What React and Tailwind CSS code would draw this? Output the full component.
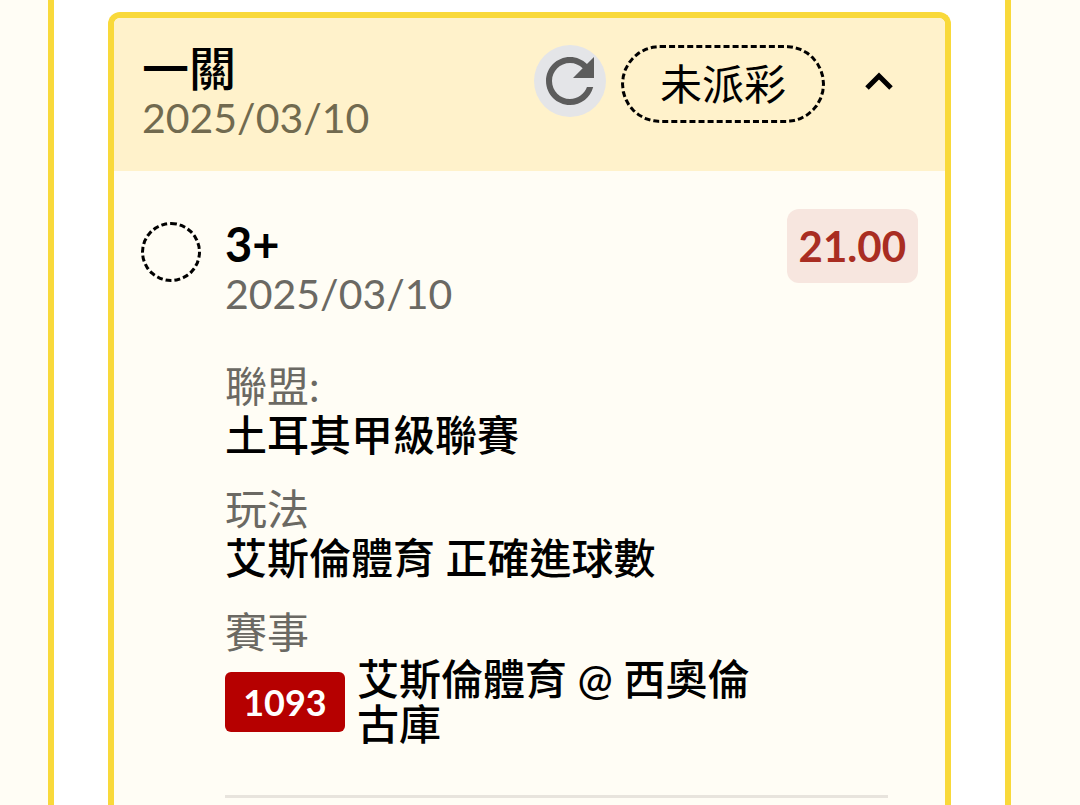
import React from 'react';

function RefreshIcon() {
  return (
    <svg viewBox="0 0 24 24" className="size-[72px]" aria-hidden="true">
      <path
        fill="#5c5c5c"
        d="M17.65 6.35C16.2 4.9 14.21 4 12 4c-4.42 0-7.99 3.58-7.99 8s3.57 8 7.99 8c3.73 0 6.84-2.55 7.73-6h-2.08c-.82 2.33-3.04 4-5.65 4-3.31 0-6-2.69-6-6s2.69-6 6-6c1.66 0 3.14.69 4.22 1.78L13 11h7V4l-2.35 2.35z"
      />
    </svg>
  );
}

function ChevronUpIcon() {
  return (
    <svg viewBox="0 0 28 20" className="h-5 w-7" aria-hidden="true">
      <path d="M2 17L14 5L26 17" fill="none" stroke="#000" strokeWidth="5" />
    </svg>
  );
}

function Detail({ label, children }) {
  return (
    <div className="mb-6">
      <dt className="leading-[50px] text-[#6b6963]">{label}</dt>
      <dd className="font-medium">{children}</dd>
    </div>
  );
}

function Selection() {
  return (
    <article className="flex items-start gap-6 pt-[38px] pr-[27px] pl-[27px]">
      <span className="mt-[13px] size-[60px] shrink-0 rounded-full border-[3px] border-dashed border-black" />
      <div className="min-w-0 flex-1">
        <div className="flex items-start justify-between">
          <div className="pt-[10px]">
            <h3 className="text-[47px] leading-[50px] font-bold">3+</h3>
            <time dateTime="2025-03-10" className="block text-[41px] leading-[50px] text-[#6b6963]">
              2025/03/10
            </time>
          </div>
          <span className="rounded-xl bg-[#f7e6df] px-3 leading-[74px] font-bold text-[#a92d22]">21.00</span>
        </div>
        <div className="mt-[42px] mr-[30px] border-b-[3px] border-[#e8e4dd] pb-6">
          <dl>
            <Detail label="聯盟:">
              <span className="block leading-[49px]">土耳其甲級聯賽</span>
            </Detail>
            <Detail label="玩法">
              <span className="block leading-[49px]">艾斯倫體育 正確進球數</span>
            </Detail>
            <Detail label="賽事">
              <span className="flex items-center gap-3">
                <span className="w-[120px] shrink-0 rounded-md bg-[#b60000] text-center text-4xl leading-[60px] font-bold text-white">
                  1093
                </span>
                <span className="max-w-[400px] leading-[45px]">艾斯倫體育 @ 西奧倫古庫</span>
              </span>
            </Detail>
          </dl>
        </div>
      </div>
    </article>
  );
}

export default function App() {
  return (
    <div className="flex min-h-screen bg-[#fffdf5] pr-[69px] pl-12 font-[Lato,'Noto_Sans_CJK_TC',sans-serif] text-[42px] text-black">
      <main className="flex flex-1 border-x-6 border-[#f9d93a] bg-white px-[54px] pt-3">
        <section className="flex-1 rounded-t-xl border-6 border-b-0 border-[#f9d93a] bg-[#fffdf5]">
          <header className="flex items-start justify-between rounded-t-md bg-[#fff2cb] px-7 pt-[25px] pb-7">
            <div>
              <h2 className="text-[47px] leading-[50px] font-medium">一關</h2>
              <time dateTime="2025-03-10" className="block text-[41px] leading-[50px] text-[#716a4f]">
                2025/03/10
              </time>
            </div>
            <div className="flex items-start pt-[2px]">
              <button type="button" aria-label="重新整理" className="rounded-full bg-[#e4e5e8]">
                <RefreshIcon />
              </button>
              <span className="ml-[15px] rounded-full border-[3px] border-dashed border-black px-9 leading-[72px]">
                未派彩
              </span>
              <button type="button" aria-label="收合" className="flex h-[72px] w-[92px] items-center justify-end pr-6">
                <ChevronUpIcon />
              </button>
            </div>
          </header>
          <Selection />
        </section>
      </main>
    </div>
  );
}
